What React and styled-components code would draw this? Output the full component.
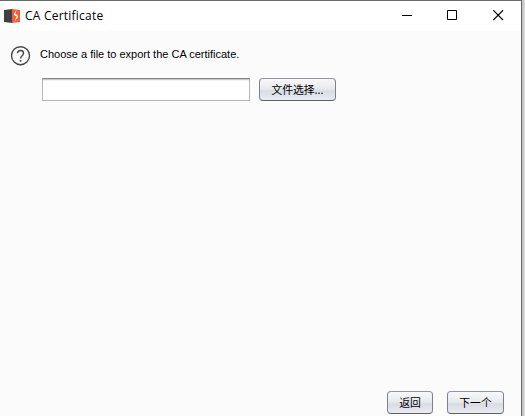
import React from "react";
import styled, { createGlobalStyle } from "styled-components";

const GlobalStyle = createGlobalStyle`
  * { box-sizing: border-box; }
  body { margin: 0; overflow: hidden; background: #d2d2d2; }
`;

const Desktop = styled.div`
  display: flex;
  width: 525px;
  height: 416px;
  overflow: hidden;
  background: linear-gradient(90deg, #bcbcbc 522px, #dedede 525px);
`;

const Window = styled.main`
  display: flex;
  flex-direction: column;
  width: 522px;
  height: 416px;
  border-top: 1px solid #6b6b6b;
  border-right: 1px solid #6b6b6b;
  background: #fbfbfb;
  color: #000;
`;

const TitleBar = styled.header`
  display: flex;
  align-items: center;
  height: 30px;
  padding-left: 4px;
  background: #fff;
`;

const Title = styled.h1`
  flex: 1;
  margin: 0 0 0 5px;
  font: 400 12px/16px "Open Sans", "Noto Sans", sans-serif;
  letter-spacing: 0.22px;
  white-space: nowrap;
`;

const WindowControl = styled.button`
  display: flex;
  align-items: flex-start;
  width: ${(p) => p.$width}px;
  height: 30px;
  padding: 9px 0 0;
  border: 0;
  background: transparent;
`;

const Content = styled.section`
  display: flex;
  flex: 1;
  padding: 15px 0 0 10px;
`;

const Form = styled.div`
  margin-left: 9px;
`;

const Prompt = styled.p`
  margin: 1px 0 0;
  height: 31px;
  font: 400 11px/14px "Liberation Sans", Arial, sans-serif;
  white-space: nowrap;
`;

const FieldRow = styled.div`
  display: flex;
  gap: 9px;
  padding-left: 2px;
`;

const FileInput = styled.input`
  width: 208px;
  height: 23px;
  padding: 2px 5px;
  border: 1px solid #b5b5b5;
  border-top-color: #858585;
  border-radius: 0;
  outline: 0;
  background: #fff;
  box-shadow: inset 0 1px 0 #c8c8c8, inset 0 2px 0 #f3f3f3;
`;

const Button = styled.button`
  display: flex;
  align-items: center;
  justify-content: center;
  width: ${(p) => p.$width}px;
  height: 23px;
  padding: 0 0 1px;
  border: 1px solid #8c8f99;
  border-color: #92959c #7c818c #5c626d;
  border-radius: 4px;
  background: linear-gradient(#f8f8fa 0%, #e9eaee 45%, #dadce3 58%, #e9ebf1 100%);
  color: #000;
  font: 400 10.8px/16px "Noto Sans CJK SC", sans-serif;
  white-space: nowrap;
`;

const Footer = styled.footer`
  display: flex;
  justify-content: flex-end;
  gap: 14px;
  padding: 0 17px 2px 0;
`;

const BurpIcon = () => (
  <svg width="16" height="16" viewBox="0 0 16 16" aria-hidden="true">
    <path d="M0 2 8 1v14l-8-1z" fill="#3e4144" />
    <path d="M8 1 16 2v12l-8 1z" fill="#f85d36" />
    <path d="m12.5 2-2.8 4.2 1 1.5 2 .6-2.2 5.5 3.6-4.7-.7-2.2-2-.8z" fill="#fff3ed" />
  </svg>
);

const QuestionIcon = () => (
  <svg width="21" height="21" viewBox="0 0 21 21" fill="none" stroke="#444" aria-hidden="true">
    <circle cx="10.5" cy="9.7" r="9" strokeWidth="1.35" />
    <path d="M7.5 7.2c0-1.7 1.1-2.7 3-2.7s3 1 3 2.7c0 2.4-3 2.6-3 5.4" strokeWidth="1.4" />
    <path d="M9.7 14h1.6v1.7H9.7z" fill="#444" stroke="none" />
  </svg>
);

const ControlIcon = ({ children }) => (
  <svg width="11" height="11" viewBox="0 0 11 11" fill="none" stroke="#000" aria-hidden="true">
    {children}
  </svg>
);

export default function App() {
  return (
    <>
      <GlobalStyle />
      <Desktop>
        <Window>
          <TitleBar>
            <BurpIcon />
            <Title>CA Certificate</Title>
            <WindowControl aria-label="Minimize" $width={45}>
              <ControlIcon><path d="M0 5.5h10" /></ControlIcon>
            </WindowControl>
            <WindowControl aria-label="Maximize" $width={46}>
              <ControlIcon><path d="M.5.5h9v9h-9z" /></ControlIcon>
            </WindowControl>
            <WindowControl aria-label="Close" $width={28}>
              <ControlIcon><path d="m.3.3 9.7 9.7m0-9.7L.3 10" strokeWidth="1.15" /></ControlIcon>
            </WindowControl>
          </TitleBar>
          <Content>
            <QuestionIcon />
            <Form>
              <Prompt>Choose a file to export the CA certificate.</Prompt>
              <FieldRow>
                <FileInput aria-label="Certificate file" />
                <Button $width={77}>文件选择...</Button>
              </FieldRow>
            </Form>
          </Content>
          <Footer>
            <Button $width={46}>返回</Button>
            <Button $width={57}>下一个</Button>
          </Footer>
        </Window>
      </Desktop>
    </>
  );
}
